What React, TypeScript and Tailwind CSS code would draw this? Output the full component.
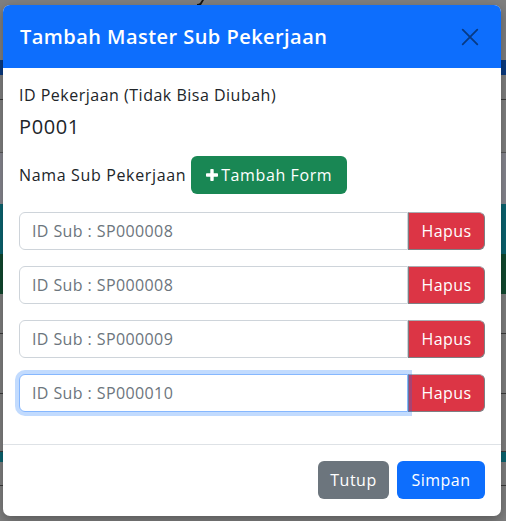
import { useState } from 'react';

const rows = ['SP000008', 'SP000008', 'SP000009', 'SP000010'];

function Backdrop() {
  // dimmed page behind the modal
  return (
    <div className="flex flex-col w-full h-full">
      <div className="h-[60px] bg-[#7f7f7f] relative">
        <svg className="absolute left-[195px] top-0" width="10" height="6" viewBox="0 0 10 6">
          <path d="M7 0 L9 0 L6 5 Q5 6 2 6 L2 4 Q4 4 5 3 Z" fill="#111" />
        </svg>
      </div>
      <div className="h-[15px] bg-[#0a3a80]" />
      <div className="h-[25px] bg-[#7f7f7f] border-b border-[#3a3a3a]" />
      <div className="h-[52px] bg-[#808080]" />
      <div className="h-[52px] bg-[#87878f] border-t border-[#5a5a5a]" />
      <div className="h-[50px] bg-[#0b6470]" />
      <div className="h-[40px] bg-[#11492f]" />
      <div className="h-[40px] bg-[#7f7f7f] border-b border-[#3a3a3a]" />
      <div className="h-[60px] bg-[#7f7f7f] border-b border-[#3a3a3a]" />
      <div className="h-[58px] bg-[#7f7f7f] border-b border-[#3a3a3a]" />
      <div className="h-[10px] bg-[#0b6470]" />
      <div className="h-[24px] bg-[#7f7f7f] border-b border-[#3a3a3a]" />
      <div className="flex-1 bg-[#7f7f7f]" />
    </div>
  );
}

function SubRow({ id, focused }: { id: string; focused?: boolean }) {
  return (
    <div className="flex h-[38px]">
      <input
        readOnly
        placeholder={`ID Sub : ${id}`}
        className={
          focused
            ? 'flex-1 min-w-0 h-full px-3 text-[16px] tracking-[0.4px] text-[#212529] placeholder:text-[#6c757d] bg-white rounded-l-[6px] border border-[#86b7fe] outline-none shadow-[0_0_0_4px_rgba(13,110,253,0.25)] relative z-10'
            : 'flex-1 min-w-0 h-full px-3 text-[16px] tracking-[0.4px] text-[#212529] placeholder:text-[#6c757d] bg-white rounded-l-[6px] border border-[#ced4da] outline-none'
        }
      />
      <button className="w-[77px] h-full bg-[#dc3545] text-white text-[16px] tracking-[0.4px] rounded-r-[6px] border border-[#7d7f83] border-t-[#a9adb2]">
        Hapus
      </button>
    </div>
  );
}

export default function App() {
  const [items] = useState(rows);

  return (
    <div
      className="relative w-[506px] h-[521px] overflow-hidden"
      style={{ fontFamily: '"Open Sans", "Noto Sans", sans-serif' }}
    >
      <Backdrop />

      {/* Modal */}
      <div className="absolute left-[3px] top-[5px] w-[498px] h-[511px] bg-white rounded-[7px] shadow-[0_4px_12px_rgba(0,0,0,0.3)] flex flex-col overflow-hidden">
        <div className="h-[63px] bg-[#0d6efd] flex items-center justify-between px-4 pl-[17px]">
          <h5 className="text-white text-[20px] font-semibold tracking-[0.45px]">Tambah Master Sub Pekerjaan</h5>
          <button className="w-[32px] h-[32px] flex items-center justify-center mr-[-1px]" aria-label="Close">
            <svg width="18" height="18" viewBox="0 0 16 16" fill="none" stroke="#073a85" strokeWidth={1.6} strokeLinecap="round">
              <path d="M1.5 1.5l13 13M14.5 1.5l-13 13" />
            </svg>
          </button>
        </div>

        <div className="flex-1 px-4 pt-[15px] text-[#212529] tracking-[0.5px]">
          <p className="text-[16px] leading-6">ID Pekerjaan (Tidak Bisa Diubah)</p>
          <p className="text-[20px] leading-6 mt-2 tracking-[0.6px]">P0001</p>

          <div className="flex items-center mt-[17px] gap-[5px]">
            <span className="text-[16px] tracking-[0.65px]">Nama Sub Pekerjaan</span>
            <button className="h-[38px] px-[15px] bg-[#198754] text-white text-[16px] font-medium rounded-[6px] flex items-center gap-[3px] tracking-[0.6px]">
              <svg width="12" height="12" viewBox="0 0 12 12" fill="#fff">
                <rect x="4.3" y="0" width="3.4" height="12" rx="0.8" />
                <rect x="0" y="4.3" width="12" height="3.4" rx="0.8" />
              </svg>
              Tambah Form
            </button>
          </div>

          <div className="flex flex-col gap-4 mt-[18px]">
            {items.map((id, i) => (
              <SubRow key={i} id={id} focused={i === items.length - 1} />
            ))}
          </div>
        </div>

        <div className="border-t border-[#dee2e6] h-[72px] flex items-start justify-end gap-2 px-4 pt-4 tracking-[0.5px]">
          <button className="h-[38px] w-[71px] bg-[#6c757d] text-white text-[16px] rounded-[6px]">Tutup</button>
          <button className="h-[38px] w-[88px] bg-[#0d6efd] text-white text-[16px] rounded-[6px]">Simpan</button>
        </div>
      </div>
    </div>
  );
}
